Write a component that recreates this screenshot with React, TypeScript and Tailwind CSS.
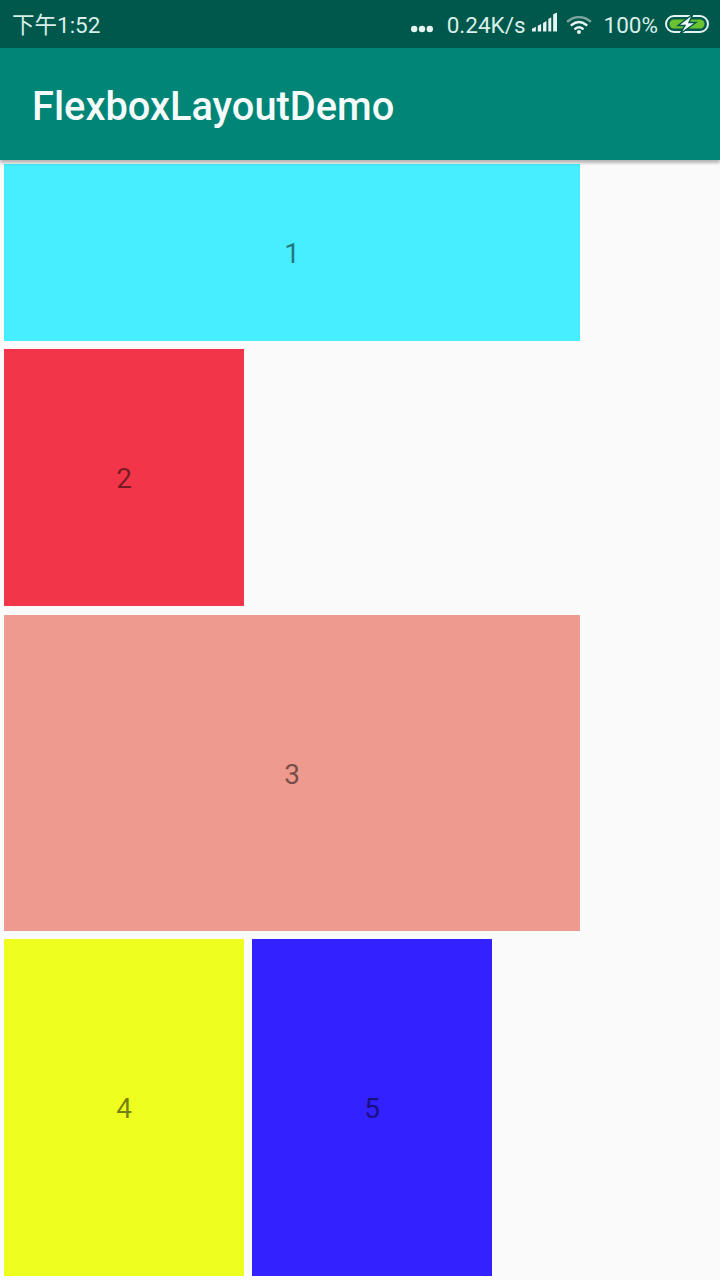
export default function App() {
  const label = "relative top-px text-[28px] leading-none text-black/50";
  const box = "m-1 flex items-center justify-center";
  return (
    <div className="flex h-[1280px] w-[720px] flex-col overflow-hidden bg-[#fafafa] font-['Roboto','Noto_Sans_CJK_SC',sans-serif]">
      <div className="flex h-12 shrink-0 items-center justify-between bg-[#00574b] pl-3 pr-[11px] pt-[3px] text-[22.5px] text-[#d8efea]">
        <span className="font-['Roboto','Noto_Sans_CJK_SC',sans-serif]">下午1:52</span>
        <div className="flex items-center">
          <svg width="22" height="8" viewBox="0 0 22 8" className="mt-[6px] mr-[14px]" fill="#e6f4f1">
            <circle cx="3.2" cy="4" r="3.2" />
            <circle cx="11" cy="4" r="3.2" />
            <circle cx="18.8" cy="4" r="3.2" />
          </svg>
          <span>0.24K/s</span>
          <svg width="25" height="20" viewBox="0 0 26 20" className="ml-[6px] -mt-[7px]" fill="#e6f4f1">
            <path d="M0 20 V17 L4 15 V20 Z" />
            <path d="M6 20 V14 L9.5 12 V20 Z" />
            <path d="M11.5 20 V11 L15 9 V20 Z" />
            <path d="M17 20 V7 L20 5 V20 Z" />
            <path d="M22 20 V2 L26 0 V20 Z" />
          </svg>
          <svg width="26" height="20" viewBox="0 0 28 20" className="ml-[9px] -mt-[2px]" fill="none" strokeLinecap="round">
            <path d="M2 6 C9 0 19 0 26 6" stroke="#7fa8a0" strokeWidth="2.6" />
            <path d="M6 10 C11 6 17 6 22 10" stroke="#e6f4f1" strokeWidth="2.6" />
            <path d="M10 14 C12.5 12 15.5 12 18 14" stroke="#e6f4f1" strokeWidth="2.6" />
            <circle cx="14" cy="17.5" r="2.2" fill="#e6f4f1" />
          </svg>
          <span className="ml-[12px]">100%</span>
          <svg width="44" height="18" viewBox="0 0 44 18" className="ml-[7px] -mt-[3px]">
            <rect x="1" y="1" width="42" height="16" rx="8" fill="none" stroke="#e6f4f1" strokeWidth="2" />
            <rect x="4.5" y="4.5" width="35" height="9" rx="4.5" fill="#6cc22f" />
            <path d="M28 -1 L13 10.5 H20 L15 19 L31 7.5 H24 Z" fill="#f2faf8" stroke="#00574b" strokeWidth="1.4" />
          </svg>
        </div>
      </div>
      <div className="relative z-10 flex h-[112px] shrink-0 items-center bg-[#008577] pl-[32px] pt-[5px] shadow-[0_3px_3px_rgba(0,0,0,0.28)]">
        <span className="text-[39.8px] font-medium leading-none text-[#f4fbfa]">FlexboxLayoutDemo</span>
      </div>
      <div className="flex flex-wrap content-start">
        <div className="w-full">
          <div className={`${box} h-[177px] w-[576px] bg-[#46eeff]`}>
            <span className={label}>1</span>
          </div>
        </div>
        <div className="w-full">
          <div className={`${box} mt-1 h-[257px] w-[240px] bg-[#f23549]`}>
            <span className={label}>2</span>
          </div>
        </div>
        <div className="w-full">
          <div className={`${box} mt-[5px] h-[316px] w-[576px] bg-[#ef9a8f]`}>
            <span className="relative top-[2px] text-[28px] leading-none text-black/50">3</span>
          </div>
        </div>
        <div className="flex w-full">
          <div className={`${box} h-[337px] w-[240px] bg-[#eeff1f]`}>
            <span className={label}>4</span>
          </div>
          <div className={`${box} h-[337px] w-[240px] bg-[#3321ff]`}>
            <span className={label}>5</span>
          </div>
        </div>
      </div>
    </div>
  );
}
